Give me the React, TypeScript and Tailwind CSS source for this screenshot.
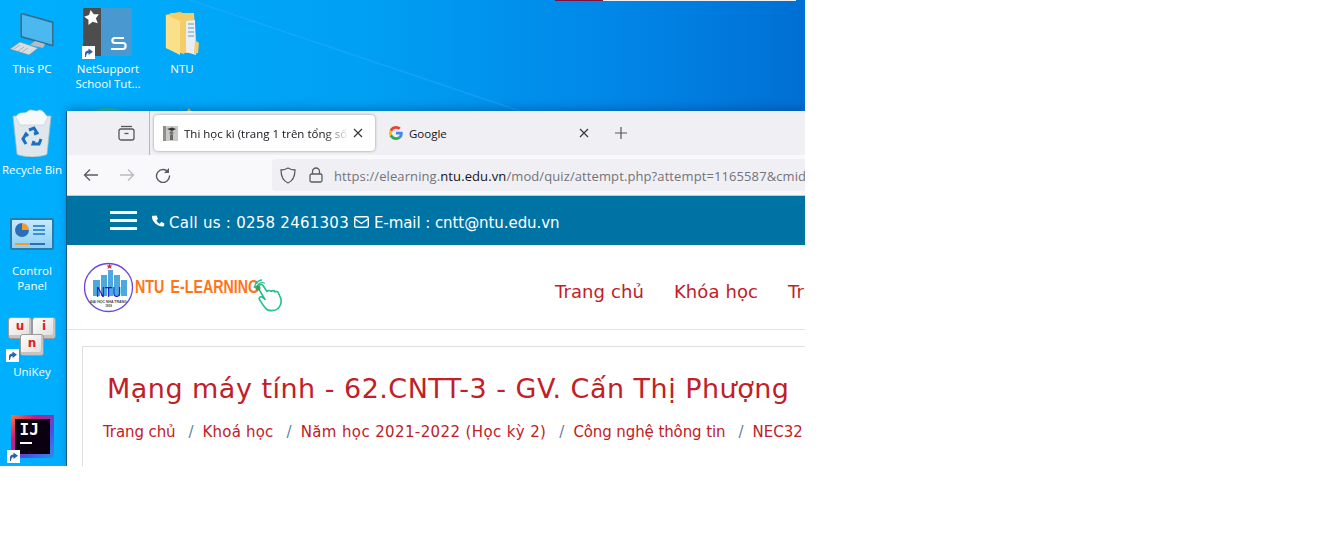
const segoe = "font-['Open_Sans',sans-serif]"

function Shortcut({ className }: { className: string }) {
  return (
    <div className={`absolute w-[13px] h-[13px] bg-white flex items-center justify-center ${className}`}>
      <svg width="11" height="11" viewBox="0 0 11 11">
        <path d="M2 10V6.500C2 4.500 3.500 3.500 5.500 3.500V1.500L10 4.800 5.500 8V6C4 6 3.400 7 3 10Z" fill="#2a62a8" />
      </svg>
    </div>
  )
}

function DesktopIcon({ className, label, children }: { className: string; label?: React.ReactNode; children: React.ReactNode }) {
  return (
    <div className={`absolute flex flex-col items-center ${className}`}>
      <div className="relative w-[50px] h-[50px] flex items-center justify-center">{children}</div>
      {label && <div className={`mt-[3px] w-[80px] text-center text-white text-[11.5px] leading-[15px] ${segoe}`}>{label}</div>}
    </div>
  )
}

function Wallpaper() {
  return (
    <svg className="absolute inset-0" width="805" height="466" viewBox="0 0 805 466">
      <path d="M190 0L520 111" stroke="#3fb4ff" strokeWidth="1.500" opacity="0.3" fill="none" />
      <path d="M93 111c8-4 22-4 30 0Z" fill="#30c090" opacity="0.8" />
      <path d="M187 111l2-3 2 3Z" fill="#e8d040" />
    </svg>
  )
}

function BrowserTabs() {
  return (
    <div className="h-[44px] bg-[#f0f0f4] flex items-center shrink-0">
      <div className="w-[83px] h-full flex items-center justify-end pr-[14px] border-r border-[#b8b8bc]">
        <svg width="17" height="16" viewBox="0 0 17 16" fill="none" stroke="#55555c" strokeWidth="1.300">
          <path d="M3 1.500h11" />
          <rect x="1" y="4" width="15" height="11" rx="2" />
          <path d="M6.500 8.500h4" />
        </svg>
      </div>
      <div className="ml-[4px] w-[221px] h-[36px] bg-white rounded-[4px] shadow-[0_0_3px_rgba(0,0,0,0.4)] flex items-center pl-[9px] pr-[12px]">
        <svg className="shrink-0" width="15" height="15" viewBox="0 0 15 15">
          <rect width="15" height="15" fill="#c9c9c7" />
          <rect x="0" y="0" width="3" height="15" fill="#8f8f8d" />
          <path d="M4 3l5-1.500 4 1.500-4 2Z" fill="#333" />
          <circle cx="8.500" cy="7" r="2" fill="#777" />
          <path d="M7 9h3v5H7Z" fill="#666" />
        </svg>
        <span className={`ml-[6px] pt-[1px] w-[165px] overflow-hidden whitespace-nowrap text-[11.5px] text-[#15141a] [mask-image:linear-gradient(to_right,black_85%,transparent)] ${segoe}`}>
          Thi học kì (trang 1 trên tổng số trang)
        </span>
        <svg className="ml-auto shrink-0" width="10" height="10" viewBox="0 0 10 10" stroke="#333" strokeWidth="1.100">
          <path d="M1 1l8 8M9 1l-8 8" />
        </svg>
      </div>
      <div className="w-[222px] h-[36px] flex items-center pl-[14px] pr-[8px]">
        <svg className="shrink-0" width="14" height="14" viewBox="0 0 48 48">
          <path fill="#EA4335" d="M24 9.500c3.500 0 6.700 1.200 9.200 3.600l6.900-6.900C35.900 2.400 30.500 0 24 0 14.600 0 6.500 5.400 2.600 13.200l8 6.200C12.400 13.700 17.700 9.500 24 9.500z" />
          <path fill="#4285F4" d="M47 24.500c0-1.600-.1-3.100-.4-4.500H24v9h12.900c-.6 3-2.200 5.500-4.700 7.200l7.700 6C44.400 38 47 31.800 47 24.500z" />
          <path fill="#FBBC05" d="M10.500 28.600c-.5-1.400-.8-3-.8-4.600s.3-3.200.8-4.600l-8-6.200C1 16.500 0 20.100 0 24s1 7.500 2.600 10.800l7.900-6.200z" />
          <path fill="#34A853" d="M24 48c6.500 0 11.900-2.100 15.900-5.800l-7.700-6c-2.100 1.400-4.900 2.300-8.200 2.300-6.300 0-11.600-4.200-13.500-9.900l-8 6.200C6.500 42.600 14.600 48 24 48z" />
        </svg>
        <span className={`ml-[6px] pt-[1px] text-[11.5px] text-[#15141a] ${segoe}`}>Google</span>
        <svg className="ml-auto shrink-0" width="10" height="10" viewBox="0 0 10 10" stroke="#333" strokeWidth="1.100">
          <path d="M1 1l8 8M9 1l-8 8" />
        </svg>
      </div>
      <svg className="ml-[18px] shrink-0" width="12" height="12" viewBox="0 0 12 12" stroke="#55555c" strokeWidth="1.200">
        <path d="M6 0v12M0 6h12" />
      </svg>
    </div>
  )
}

function BrowserToolbar() {
  return (
    <div className="h-[40px] bg-[#f9f9fb] border-b border-[#c8c8cc] flex items-center shrink-0 box-content">
      <svg className="ml-[16px] shrink-0" width="16" height="14" viewBox="0 0 16 14" fill="none" stroke="#5b5b66" strokeWidth="1.300">
        <path d="M15 7H1.500M7 1.500L1.500 7 7 12.500" />
      </svg>
      <svg className="ml-[20px] shrink-0" width="16" height="14" viewBox="0 0 16 14" fill="none" stroke="#b9b9c0" strokeWidth="1.300">
        <path d="M1 7h13.500M9 1.500L14.500 7 9 12.500" />
      </svg>
      <svg className="ml-[20px] shrink-0" width="16" height="16" viewBox="0 0 16 16" fill="none" stroke="#5b5b66" strokeWidth="1.400">
        <path d="M13.500 5.500A6.500 6.500 0 1 0 14.500 8.500" />
        <path d="M14 1v5H9" fill="#5b5b66" stroke="none" />
      </svg>
      <div className="ml-[101px] flex-1 h-[32px] bg-[#f0f0f4] rounded-l-[4px] flex items-center pl-[8px] overflow-hidden">
        <svg className="shrink-0" width="16" height="17" viewBox="0 0 16 17" fill="none" stroke="#5b5b66" strokeWidth="1.300">
          <path d="M8 1c2 1.300 4 2 7 2 0 6-1.500 10.500-7 13C2.500 13.500 1 9 1 3c3 0 5-.7 7-2z" />
        </svg>
        <svg className="ml-[13px] shrink-0" width="14" height="16" viewBox="0 0 14 16" fill="none" stroke="#5b5b66" strokeWidth="1.300">
          <rect x="1" y="7" width="12" height="8" rx="1.500" />
          <path d="M3.500 7V4.500a3.500 3.500 0 0 1 7 0V7" />
        </svg>
        <span className={`ml-[11px] pt-[3px] whitespace-nowrap text-[13px] text-[#73737a] tracking-[0.1px] ${segoe}`}>
          https://elearning.<span className="text-[#15141a]">ntu.edu.vn</span>/mod/quiz/attempt.php?attempt=1165587&amp;cmid
        </span>
      </div>
    </div>
  )
}

function TopBar() {
  return (
    <div className="h-[49px] bg-[#0073a5] flex items-center pl-[43px] text-white text-[15px] font-['DejaVu_Sans',sans-serif] whitespace-nowrap shrink-0">
      <div className="w-[27px] flex flex-col gap-[5px] mt-[-1px]">
        <div className="h-[3px] bg-white" />
        <div className="h-[3px] bg-white" />
        <div className="h-[3px] bg-white" />
      </div>
      <svg className="ml-[15px] mt-[3px] shrink-0" width="13" height="14" viewBox="0 0 13 13" fill="white">
        <path d="M2.400.300l1.700-.3c.4 0 .6.100.7.400l1 2.700c.1.300 0 .5-.2.700L4.400 4.900c.7 1.500 1.900 2.700 3.400 3.400l1.200-1.500c.2-.2.500-.3.700-.2l2.300 1.100c.3.100.4.300.4.600l-.4 2c-.1.400-.3.600-.7.600C5 10.900-.1 6 0 1.100c0-.4.100-.7.400-.8Z" />
      </svg>
      <span className="ml-[4px] mt-[5px] tracking-[0.25px]">Call us : 0258 2461303</span>
      <svg className="ml-[5px] mt-[3px] shrink-0" width="15" height="12" viewBox="0 0 15 12" fill="none" stroke="white" strokeWidth="1.400">
        <rect x="0.700" y="0.700" width="13.600" height="10.600" rx="1.500" />
        <path d="M1 3l6.500 4.500L14 3" />
      </svg>
      <span className="ml-[5px] mt-[5px] tracking-[-0.07px]">E-mail : cntt@ntu.edu.vn</span>
    </div>
  )
}

function Logo() {
  return (
    <svg width="200" height="52" viewBox="0 0 200 52">
      <circle cx="24.500" cy="26.500" r="24" fill="white" stroke="#6a48e0" strokeWidth="1.300" />
      <rect x="9" y="19" width="7" height="16" fill="#4ea8de" />
      <rect x="17" y="14" width="6" height="21" fill="#4ea8de" />
      <rect x="24" y="9" width="5" height="26" fill="#4ea8de" />
      <rect x="30" y="14" width="6" height="21" fill="#4ea8de" />
      <rect x="37" y="19" width="6" height="16" fill="#4ea8de" />
      <path d="M25.500 2.500l.9 2 2.100.1-1.600 1.300.6 2-2-1.100-2 1.100.6-2-1.600-1.300 2.100-.1Z" fill="#e03030" />
      <text x="24.500" y="36" textAnchor="middle" fontSize="14" textLength="25" lengthAdjust="spacingAndGlyphs" fontFamily="Liberation Sans" fill="#1414c8">NTU</text>
      <text x="24.500" y="41.500" textAnchor="middle" fontSize="3.500" fontWeight="700" fontFamily="Liberation Sans" fill="#444">ĐẠI HỌC NHA TRANG</text>
      <text x="24.500" y="46" textAnchor="middle" fontSize="3" fontWeight="700" fontFamily="Liberation Sans" fill="#444">1959</text>
      <text x="51" y="32" fontSize="18" fontWeight="700" wordSpacing="3" fontFamily="Liberation Sans Narrow, Liberation Sans" textLength="124" lengthAdjust="spacingAndGlyphs" fill="#ff7518">NTU E-LEARNING</text>
      <g transform="translate(1.500 0)" fill="none" stroke="#1fc08a" strokeWidth="1.600" strokeLinecap="round" strokeLinejoin="round">
        <path d="M174 24c1.500-1 2.500-.5 3.500.5l4 6c1.500-1.500 3.500-1 4 0 1.500-1.500 3.500-1 4 .5 1.500-1 3-.5 3.500 1l2.500 6c.5 3-.5 7-3 9.500-2 2-8 3-11 1-3-2-5-6-7.500-10-1-1.500.5-3.500 2.500-2.500l3 2.500-6.500-11c-.5-1.500-.5-2.500 .5-3.500Z" />
        <path d="M171 28a6 6 0 0 1 8-6M169 26a9 9 0 0 1 7-7" strokeWidth="1.300" />
      </g>
      <circle cx="174" cy="27" r="2.500" fill="#3f9f5f" />
    </svg>
  )
}

function Crumb({ children, className, last }: { children: string; className?: string; last?: boolean }) {
  return (
    <>
      <span className={`text-[#c12026] ${className ?? ""}`}>{children}</span>
      {!last && <span className="text-[#5f7f9f] mx-[11px] relative left-[2px]">/</span>}
    </>
  )
}

function Page() {
  return (
    <div className="flex-1 bg-white flex flex-col font-['DejaVu_Sans',sans-serif] overflow-hidden">
      <div className="h-[84px] flex items-center border-b border-[#e3e3e3] shrink-0 box-content">
        <div className="ml-[17px]"><Logo /></div>
        <nav className="ml-[271px] mt-[8px] flex gap-[30px] text-[18px] tracking-[0.1px] text-[#c12026] whitespace-nowrap">
          <span>Trang chủ</span>
          <span>Khóa học</span>
          <span>Trang</span>
        </nav>
      </div>
      <div className="ml-[15px] mt-[16px] flex-1 border-l border-t border-[#dedede] pl-[24px] pt-[26px] whitespace-nowrap">
        <h1 className="text-[27px] leading-[32px] text-[#c12026] tracking-[0.48px]">Mạng máy tính - 62.CNTT-3 - GV. Cấn Thị Phượng</h1>
        <div className="mt-[17px] ml-[-4px] text-[15px] leading-[20px]">
          <Crumb className="tracking-[-0.1px]">Trang chủ</Crumb>
          <Crumb className="tracking-[0.2px]">Khoá học</Crumb>
          <Crumb className="tracking-[0.38px]">Năm học 2021-2022 (Học kỳ 2)</Crumb>
          <Crumb className="tracking-[-0.1px]">Công nghệ thông tin</Crumb>
          <Crumb last>NEC32</Crumb>
        </div>
      </div>
    </div>
  )
}

function Key({ className, letter }: { className: string; letter: string }) {
  return (
    <span className={`absolute w-[24px] h-[22px] bg-[linear-gradient(135deg,#fdfdfd,#dcdcdc)] border border-[#9a9a9a] rounded-[3px] shadow-[inset_-2px_-3px_0_#c4c4c4] flex justify-center text-[#e02020] font-bold text-[12px] leading-[17px] font-['DejaVu_Sans',sans-serif] ${className}`}>
      {letter}
    </span>
  )
}

export default function App() {
  return (
    <div className="w-[1338px] h-[548px] bg-white overflow-hidden">
      <div className="relative w-[805px] h-[466px] overflow-hidden bg-[linear-gradient(to_right,#00b0ff_0%,#00a0f4_45%,#0088e8_75%,#006fd4_100%)]">
        <Wallpaper />
        <div className="absolute left-[555px] top-0 w-[48px] h-[1px] bg-[#80103c]" />
        <div className="absolute left-[603px] top-0 w-[193px] h-[1px] bg-[#f0f0f0]" />

        <DesktopIcon className="left-[-8px] top-[8px]" label="This PC">
          <svg width="46" height="44" viewBox="0 0 46 44">
            <path d="M12 2l32 9v24l-32-9Z" fill="#1b7fb8" stroke="#506070" strokeWidth="1" />
            <path d="M13 3.500l30 8.500v21.500L13 25Z" fill="#4bb8f0" />
            <path d="M26 30l10 3-2 4-13-3Z" fill="#b4bcc4" />
            <path d="M1 38l10-7 18 6-9 7Z" fill="#d8dde2" stroke="#8a9098" strokeWidth="0.700" />
            <path d="M5 38l6-4M9 40l6-4M13 41l6-4" stroke="#9aa0a8" strokeWidth="0.700" />
          </svg>
        </DesktopIcon>

        <DesktopIcon className="left-[68px] top-[8px]" label={<>NetSupport<br />School Tut...</>}>
          <div className="w-[49px] h-[48px] flex -ml-[2px] -mt-[2px]">
            <div className="w-[18px] bg-[#4d4d4d] flex justify-center pt-[2px]">
              <svg width="16" height="16" viewBox="0 0 16 16"><path d="M8 0l2.400 4.600 5.100.800-3.700 3.600.900 5.200L8 11.700l-4.700 2.500.9-5.200L.5 5.400l5.100-.800Z" fill="white" transform="rotate(-10 8 8)" /></svg>
            </div>
            <div className="flex-1 bg-[#4a98d0] flex items-end justify-end pb-[5px] pr-[4px]">
              <svg width="19" height="15" viewBox="0 0 19 15" fill="none" stroke="white" strokeWidth="2.200"><path d="M15 2H6C2.500 2 2.500 7 6 7h8c3.500 0 3.500 6 0 6H2" /></svg>
            </div>
          </div>
          <Shortcut className="left-[-1px] bottom-[-1px]" />
        </DesktopIcon>

        <DesktopIcon className="left-[142px] top-[8px]" label="NTU">
          <svg width="36" height="46" viewBox="0 0 36 46">
            <path d="M2 5l14-3 4 2v40L2 38Z" fill="#f8d878" stroke="#d8b050" strokeWidth="0.600" />
            <path d="M6 3h24l2 30-4 10H20l-4-2Z" fill="#f5cd68" />
            <path d="M22 11l9-1 1 35-10-3Z" fill="#e8eef2" />
            <path d="M24 14h6M24 18h6M24 22h6M24 26h6" stroke="#5f9fc0" strokeWidth="1.200" />
            <path d="M2 5l14 6v34L2 38Z" fill="#fbe08c" />
            <path d="M31 30l4 3-1 10-4 1Z" fill="#f5cd68" />
          </svg>
        </DesktopIcon>

        <DesktopIcon className="left-[-8px] top-[109px]" label="Recycle Bin">
          <svg className="-mt-[2px]" width="42" height="48" viewBox="0 0 42 48">
            <path d="M2 7l38 0-4 38c-.3 2-14 3-15 3S7 47 6 45Z" fill="#dfe6ec" stroke="#b0bac4" strokeWidth="0.800" />
            <path d="M5 8c3-7 9-2 12-6 4-3 8 2 11-1 5 0 6 5 9 7l-4 8H9Z" fill="#f6f8fa" stroke="#c4ccd4" strokeWidth="0.600" />
            <path d="M18 21l5-2 3 5-3 1M30 30l-2 5-6 0 1-3M15 35l-3-5 3-5 2 2" fill="none" stroke="#1a6fc0" strokeWidth="3" />
          </svg>
        </DesktopIcon>

        <DesktopIcon className="left-[-8px] top-[210px]" label={<>Control<br />Panel</>}>
          <div className="w-[44px] h-[32px] mt-[-2px] bg-[linear-gradient(#c6e9fb,#8dd0f5)] border-2 border-[#2a7ca8] rounded-[2px] flex flex-col p-[3px]">
            <div className="flex items-center gap-[4px]">
              <div className="w-[14px] h-[14px] rounded-full bg-[conic-gradient(#f29a2e_0_25%,#2a6fb8_25%_100%)]" />
              <div className="flex flex-col gap-[2px]">
                <div className="w-[12px] h-[2px] bg-[#3d8fd0]" />
                <div className="w-[12px] h-[2px] bg-[#3d8fd0]" />
                <div className="w-[12px] h-[2px] bg-[#3d8fd0]" />
              </div>
            </div>
            <div className="mt-auto h-[2px] w-[30px] bg-[linear-gradient(to_right,#f29a2e_50%,#2a6fb8_50%)]" />
          </div>
        </DesktopIcon>

        <DesktopIcon className="left-[-8px] top-[311px]" label="UniKey">
          <div className="relative w-[48px] h-[42px] mt-[4px]">
            <Key className="left-[0px] top-[0px]" letter="u" />
            <Key className="right-[0px] top-[0px]" letter="i" />
            <Key className="left-[12px] top-[17px]" letter="n" />
          </div>
          <Shortcut className="left-[-1px] bottom-[-1px]" />
        </DesktopIcon>

        <DesktopIcon className="left-[7px] top-[411px]">
          <div className="w-[43px] h-[43px] p-[4px] bg-[linear-gradient(135deg,#ff7a2f,#d0187a_30%,#4a50e0_65%,#2f8fe8)]">
            <div className="w-full h-full bg-[#0a0010] text-white font-bold text-[16px] leading-[17px] pl-[5px] pt-[2px] font-['DejaVu_Sans_Mono',monospace]">
              IJ
              <div className="w-[12px] h-[2px] bg-white mt-[4px]" />
            </div>
          </div>
          <Shortcut className="left-[0px] bottom-[-2px]" />
        </DesktopIcon>

        <div className="absolute left-[67px] top-[111px] w-[738px] h-[355px] flex flex-col shadow-[-1px_0_0_#1a5a80,0_-3px_8px_rgba(0,50,110,0.35)] overflow-hidden">
          <BrowserTabs />
          <BrowserToolbar />
          <TopBar />
          <Page />
        </div>
      </div>
    </div>
  )
}
